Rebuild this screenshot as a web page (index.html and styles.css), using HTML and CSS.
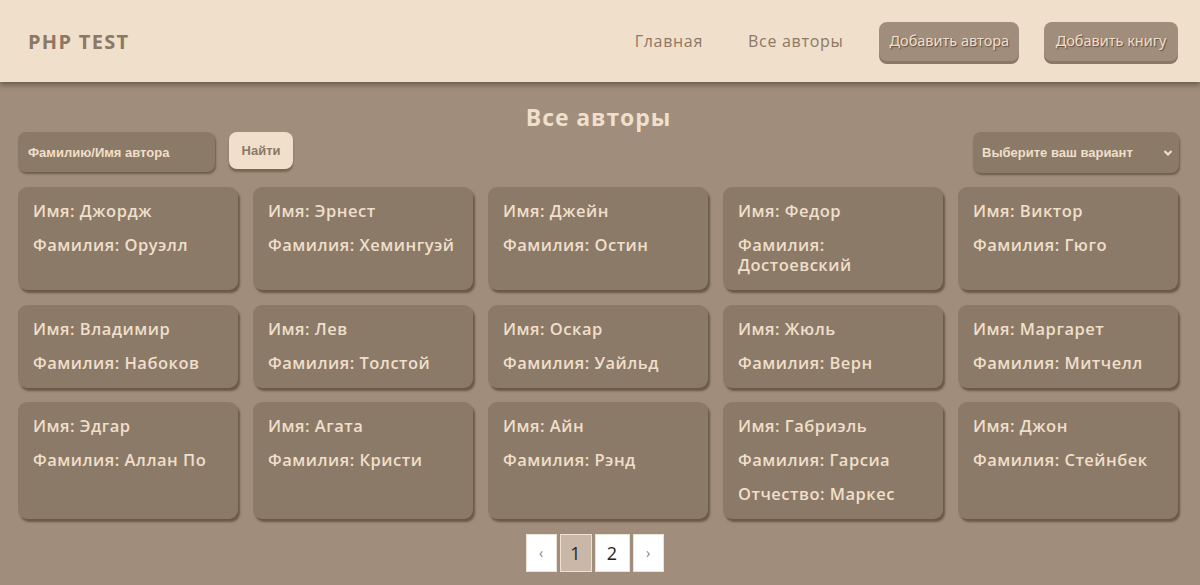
FILE: index.html
```html
<!DOCTYPE html>
<html lang="ru">
<head>
<meta charset="utf-8">
<title>PHP TEST</title>
<link rel="stylesheet" href="styles.css">
</head>
<body>
<header class="header">
  <div class="logo">PHP TEST</div>
  <nav class="nav">
    <a class="nav-link" href="#">Главная</a>
    <a class="nav-link" href="#">Все авторы</a>
    <a class="nav-btn" href="#">Добавить автора</a>
    <a class="nav-btn" href="#">Добавить книгу</a>
  </nav>
</header>
<main class="main">
  <h1 class="title">Все авторы</h1>
  <div class="toolbar">
    <div class="search">
      <input class="search-input" type="text" placeholder="Фамилию/Имя автора">
      <button class="search-btn">Найти</button>
    </div>
    <div class="select">
      <span>Выберите ваш вариант</span>
      <svg class="chev" width="10" height="8" viewBox="0 0 10 8"><path d="M1.5 2 L5 5.5 L8.5 2" fill="none" stroke="#f0dfca" stroke-width="2.2"/></svg>
    </div>
  </div>
  <div class="grid">
    <div class="card"><p>Имя: Джордж</p><p>Фамилия: Оруэлл</p></div>
    <div class="card"><p>Имя: Эрнест</p><p>Фамилия: Хемингуэй</p></div>
    <div class="card"><p>Имя: Джейн</p><p>Фамилия: Остин</p></div>
    <div class="card"><p>Имя: Федор</p><p>Фамилия: Достоевский</p></div>
    <div class="card"><p>Имя: Виктор</p><p>Фамилия: Гюго</p></div>
    <div class="card"><p>Имя: Владимир</p><p>Фамилия: Набоков</p></div>
    <div class="card"><p>Имя: Лев</p><p>Фамилия: Толстой</p></div>
    <div class="card"><p>Имя: Оскар</p><p>Фамилия: Уайльд</p></div>
    <div class="card"><p>Имя: Жюль</p><p>Фамилия: Верн</p></div>
    <div class="card"><p>Имя: Маргарет</p><p>Фамилия: Митчелл</p></div>
    <div class="card"><p>Имя: Эдгар</p><p>Фамилия: Аллан По</p></div>
    <div class="card"><p>Имя: Агата</p><p>Фамилия: Кристи</p></div>
    <div class="card"><p>Имя: Айн</p><p>Фамилия: Рэнд</p></div>
    <div class="card"><p>Имя: Габриэль</p><p>Фамилия: Гарсиа</p><p>Отчество: Маркес</p></div>
    <div class="card"><p>Имя: Джон</p><p>Фамилия: Стейнбек</p></div>
  </div>
  <div class="pager">
    <a class="page arrow" href="#">‹</a>
    <a class="page active" href="#">1</a>
    <a class="page wide" href="#">2</a>
    <a class="page arrow" href="#">›</a>
  </div>
</main>
</body>
</html>
```
FILE: styles.css
```css
* { box-sizing: border-box; }
html, body { margin: 0; padding: 0; }
body {
  background: #a08d7b;
  font-family: "Open Sans", "Noto Sans", sans-serif;
  height: 585px;
  overflow: hidden;
}
.header {
  height: 82px;
  background: #f0dfca;
  display: flex;
  align-items: center;
  justify-content: space-between;
  padding: 0 22px 0 28px;
  box-shadow: 0 3px 5px rgba(70, 55, 40, 0.55);
  position: relative;
  z-index: 1;
}
.logo {
  font-family: "Open Sans", sans-serif;
  font-weight: 700;
  font-size: 20px;
  color: #8b7865;
  letter-spacing: 1.3px;
}
.nav { display: flex; align-items: center; }
.nav-link {
  font-family: "Open Sans", sans-serif;
  font-weight: 500;
  font-size: 16px;
  letter-spacing: 0.7px;
  color: #8b7865;
  text-decoration: none;
  margin-right: 45px;
}
.nav-link + .nav-link { margin-right: 36px; }
.nav-btn {
  display: block;
  height: 39px;
  line-height: 37px;
  padding: 0 10px;
  background: #a08d7b;
  color: #f0dfca;
  font-family: "Noto Sans", sans-serif;
  font-size: 14.5px;
  text-decoration: none;
  border-radius: 8px;
  box-shadow: 0 3px 0 #8b7865;
  text-shadow: 1px 1px 1px #5e4f40;
}
.nav-btn + .nav-btn { margin-left: 25px; padding: 0 11.5px; }
.main { padding: 0 21px 0 18px; }
.title {
  margin: 0;
  padding-top: 20px;
  height: 50px;
  text-align: center;
  font-family: "Open Sans", sans-serif;
  font-weight: 700;
  font-size: 23px;
  letter-spacing: 0.9px;
  line-height: 30px;
  color: #f0dfca;
}
.toolbar {
  display: flex;
  justify-content: space-between;
  align-items: flex-start;
  height: 55px;
}
.search { display: flex; align-items: flex-start; }
.search-input {
  width: 197px;
  height: 40px;
  border: none;
  border-radius: 8px;
  background: #8b7a67;
  box-shadow: 1px 2px 2px rgba(60, 45, 30, 0.5);
  padding: 0 10px;
  font-family: "Liberation Sans", Arial, sans-serif;
  font-weight: 700;
  font-size: 13px;
  color: #f0dfca;
  outline: none;
}
.search-input::placeholder { color: #f0dfca; }
.search-btn {
  margin-left: 14px;
  width: 64px;
  height: 37px;
  border: none;
  border-radius: 8px;
  background: #f0dfca;
  color: #8b7865;
  font-family: "Liberation Sans", Arial, sans-serif;
  font-weight: 700;
  font-size: 13px;
  box-shadow: 0 3px 2px rgba(90, 70, 50, 0.55);
  padding: 0;
}
.select {
  width: 206px;
  height: 41px;
  border-radius: 8px;
  background: #8b7a67;
  box-shadow: 1px 2px 2px rgba(60, 45, 30, 0.5);
  display: flex;
  align-items: center;
  justify-content: space-between;
  padding: 0 6px 0 9px;
  font-family: "Liberation Sans", Arial, sans-serif;
  font-weight: 700;
  font-size: 13px;
  color: #f0dfca;
}
.grid {
  display: grid;
  grid-template-columns: repeat(5, 220px);
  column-gap: 15px;
  row-gap: 14.5px;
}
.card {
  background: #8b7a67;
  border-radius: 9px;
  box-shadow: 2px 3px 2px rgba(70, 55, 40, 0.6);
  padding: 14px 15px 15px;
  display: flex;
  flex-direction: column;
  gap: 14px;
}
.card p {
  margin: 0;
  font-family: "Open Sans", sans-serif;
  font-weight: 600;
  font-size: 16.5px;
  letter-spacing: 0.5px;
  line-height: 20px;
  color: #f0dfca;
}
.pager {
  display: flex;
  justify-content: center;
  gap: 3px;
  margin-top: 15px;
  padding-right: 8px;
}
.page {
  display: block;
  height: 38px;
  width: 32px;
  background: #fff;
  border: 1px solid #ece3d8;
  color: #222;
  text-decoration: none;
  font-family: "Open Sans", sans-serif;
  font-size: 18px;
  line-height: 36px;
  text-align: center;
}
.page.wide { width: 35px; }
.page.arrow { color: #8a8080; font-size: 14px; width: 31px; }
.page.active { background: #c9b7a7; border-color: #f0dfca; color: #2a2234; }
```
